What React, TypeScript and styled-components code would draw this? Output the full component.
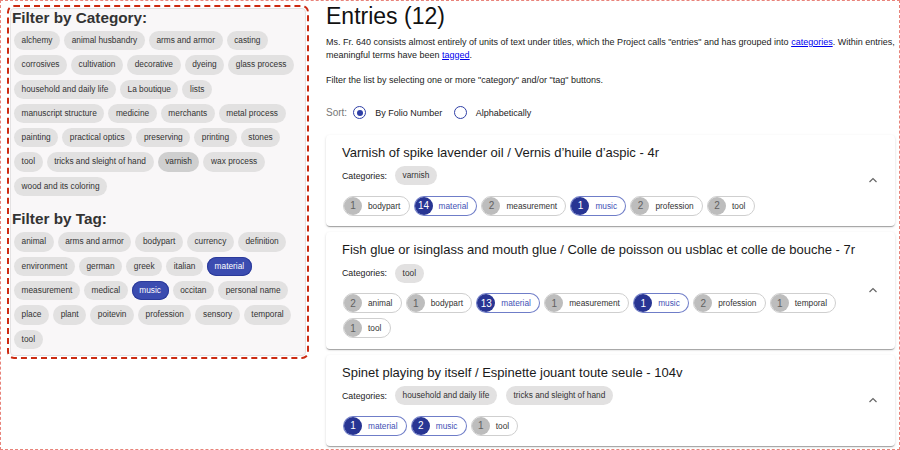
import React from "react";
import styled, { createGlobalStyle } from "styled-components";

const GlobalStyle = createGlobalStyle`
  html, body { margin: 0; padding: 0; background: #fff; }
  body { font-family: "Liberation Sans", Arial, Helvetica, sans-serif; color: #222; }
  * { box-sizing: border-box; }
`;

const Page = styled.div`
  width: 900px;
  height: 450px;
  border: 1px dashed #e8837a;
  overflow: hidden;
  display: flex;
  align-items: flex-start;
`;

const Sidebar = styled.aside`
  margin: 7px 0 0 9px;
  width: 296px;
  flex-shrink: 0;
  background: #f9f7f8;
  border: 1px solid #e4e2e3;
  border-radius: 4px;
  outline: 2px dashed #cc2a12;
  outline-offset: 1px;
  padding: 0 4px 6.5px 1px;
`;

const SideHeading = styled.h2<{ $spaced?: boolean }>`
  margin: ${(p) => (p.$spaced ? "14.4px" : "0")} 0 0 0;
  font-size: 15.3px;
  line-height: 17px;
  font-weight: 700;
  color: #333;
`;

const ChipGroup = styled.div`
  display: flex;
  flex-wrap: wrap;
  gap: 5px 4px;
  margin-top: 5px;
  padding-left: 2px;
`;

const FilterChip = styled.span<{ $selected?: boolean; $focus?: boolean }>`
  display: inline-flex;
  align-items: center;
  height: 19.3px;
  padding: 0 7.6px;
  border-radius: 10px;
  font-size: 8.3px;
  line-height: 19.3px;
  white-space: nowrap;
  color: ${(p) => (p.$selected ? "#fff" : "#333")};
  background: ${(p) =>
    p.$selected ? "#3b4cb0" : p.$focus ? "#cfcfcf" : "#e2e1e1"};
  box-shadow: ${(p) => (p.$selected ? "inset 0 0 0 1px #2b3a9a" : "none")};
`;

const Main = styled.main`
  margin-left: 20px;
  width: 569px;
  flex-shrink: 0;
  padding-top: 1.5px;
`;

const Title = styled.h1`
  margin: 0;
  font-size: 23px;
  line-height: 27px;
  font-weight: 400;
  color: #111;
`;

const Intro = styled.p<{ $gap: number }>`
  margin: ${(p) => p.$gap}px 0 0 0;
  font-size: 9px;
  line-height: 13px;
  color: #222;
`;

const Link = styled.a`
  color: #0000ee;
  text-decoration: underline;
`;

const SortRow = styled.div`
  margin-top: 19.7px;
  display: flex;
  align-items: center;
  height: 13px;
`;

const SortLabel = styled.span`
  font-size: 10px;
  color: #777;
  margin-right: 6px;
`;

const Radio = styled.span<{ $checked?: boolean }>`
  width: 13px;
  height: 13px;
  border-radius: 50%;
  border: 1.5px solid #2f3fa6;
  display: inline-flex;
  align-items: center;
  justify-content: center;
  margin-right: 9px;
  &::after {
    content: "";
    width: 6px;
    height: 6px;
    border-radius: 50%;
    background: ${(p) => (p.$checked ? "#2f3fa6" : "transparent")};
  }
`;

const RadioLabel = styled.span`
  font-size: 9px;
  color: #222;
  margin-right: 11.5px;
`;

const CardList = styled.div`
  margin-top: 15.5px;
  display: flex;
  flex-direction: column;
  gap: 6px;
`;

const Card = styled.section`
  display: flex;
  align-items: center;
  padding: 10px 10px 10.5px 16px;
  background: #fff;
  border-radius: 4px;
  box-shadow: 0 2px 1px -1px rgba(0, 0, 0, 0.2), 0 1px 1px 0 rgba(0, 0, 0, 0.14),
    0 1px 3px 0 rgba(0, 0, 0, 0.12);
`;

const CardBody = styled.div`
  flex: 1;
  min-width: 0;
`;

const CardTitle = styled.h3`
  margin: 0;
  font-size: 13px;
  line-height: 15px;
  font-weight: 400;
  color: #1a1a1a;
  white-space: nowrap;
`;

const CategoryRow = styled.div`
  margin-top: 6.5px;
  display: flex;
  align-items: center;
`;

const CatLabel = styled.span`
  font-size: 8.8px;
  color: #222;
  margin-right: 8px;
`;

const CatChips = styled.div`
  display: flex;
  gap: 9px;
`;

const CatChip = styled(FilterChip)`
  height: 19px;
  line-height: 19px;
`;

const TagRow = styled.div`
  margin-top: 10.5px;
  display: flex;
  flex-wrap: wrap;
  gap: 5px 4px;
  padding-left: 1px;
`;

const TagChip = styled.span<{ $primary?: boolean }>`
  display: inline-flex;
  align-items: center;
  height: 20px;
  border-radius: 10px;
  border: 1px solid ${(p) => (p.$primary ? "rgba(63, 81, 181, 0.75)" : "#cfcfcf")};
  padding-right: 8.3px;
  font-size: 8.3px;
  white-space: nowrap;
  color: ${(p) => (p.$primary ? "#3f51b5" : "#333")};
  background: #fff;
`;

const Avatar = styled.span<{ $primary?: boolean }>`
  width: 18px;
  height: 18px;
  border-radius: 50%;
  display: inline-flex;
  align-items: center;
  justify-content: center;
  margin-right: 6px;
  font-size: 10px;
  background: ${(p) => (p.$primary ? "#283593" : "#bdbdbd")};
  color: ${(p) => (p.$primary ? "#fff" : "#616161")};
`;

const ExpandIcon = styled.span`
  width: 24px;
  height: 24px;
  flex-shrink: 0;
  display: flex;
  align-items: center;
  justify-content: center;
  color: #666;
`;

const categories = [
  "alchemy", "animal husbandry", "arms and armor", "casting", "corrosives",
  "cultivation", "decorative", "dyeing", "glass process", "household and daily life",
  "La boutique", "lists", "manuscript structure", "medicine", "merchants",
  "metal process", "painting", "practical optics", "preserving", "printing",
  "stones", "tool", "tricks and sleight of hand", "varnish", "wax process",
  "wood and its coloring",
];

const tags = [
  "animal", "arms and armor", "bodypart", "currency", "definition", "environment",
  "german", "greek", "italian", "material", "measurement", "medical", "music",
  "occitan", "personal name", "place", "plant", "poitevin", "profession",
  "sensory", "temporal", "tool",
];

const selectedTags = ["material", "music"];

type Entry = {
  title: string;
  cats: string[];
  tags: [number, string][];
};

const entries: Entry[] = [
  {
    title: "Varnish of spike lavender oil / Vernis d\u2019huile d\u2019aspic - 4r",
    cats: ["varnish"],
    tags: [[1, "bodypart"], [14, "material"], [2, "measurement"], [1, "music"], [2, "profession"], [2, "tool"]],
  },
  {
    title: "Fish glue or isinglass and mouth glue / Colle de poisson ou usblac et colle de bouche - 7r",
    cats: ["tool"],
    tags: [[2, "animal"], [1, "bodypart"], [13, "material"], [1, "measurement"], [1, "music"], [2, "profession"], [1, "temporal"], [1, "tool"]],
  },
  {
    title: "Spinet playing by itself / Espinette jouant toute seule - 104v",
    cats: ["household and daily life", "tricks and sleight of hand"],
    tags: [[1, "material"], [2, "music"], [1, "tool"]],
  },
];

const Chevron = () => (
  <svg width="10" height="6" viewBox="0 0 10 6" fill="none">
    <path d="M1.5 5 L5 1.5 L8.5 5" stroke="currentColor" strokeWidth="1.2" />
  </svg>
);

export default function App() {
  return (
    <>
      <GlobalStyle />
      <Page>
        <Sidebar>
          <SideHeading>Filter by Category:</SideHeading>
          <ChipGroup>
            {categories.map((c) => (
              <FilterChip key={c} $focus={c === "varnish"}>{c}</FilterChip>
            ))}
          </ChipGroup>
          <SideHeading $spaced>Filter by Tag:</SideHeading>
          <ChipGroup>
            {tags.map((t) => (
              <FilterChip key={t} $selected={selectedTags.includes(t)}>{t}</FilterChip>
            ))}
          </ChipGroup>
        </Sidebar>
        <Main>
          <Title>Entries (12)</Title>
          <Intro $gap={6}>
            Ms. Fr. 640 consists almost entirely of units of text under titles, which the Project
            calls "entries" and has grouped into <Link href="#">categories</Link>. Within entries,
            meaningful terms have been <Link href="#">tagged</Link>.
          </Intro>
          <Intro $gap={12}>
            Filter the list by selecting one or more "category" and/or "tag" buttons.
          </Intro>
          <SortRow>
            <SortLabel>Sort:</SortLabel>
            <Radio $checked />
            <RadioLabel>By Folio Number</RadioLabel>
            <Radio />
            <RadioLabel>Alphabetically</RadioLabel>
          </SortRow>
          <CardList>
            {entries.map((e) => (
              <Card key={e.title}>
                <CardBody>
                  <CardTitle>{e.title}</CardTitle>
                  <CategoryRow>
                    <CatLabel>Categories:</CatLabel>
                    <CatChips>
                      {e.cats.map((c) => (
                        <CatChip key={c}>{c}</CatChip>
                      ))}
                    </CatChips>
                  </CategoryRow>
                  <TagRow>
                    {e.tags.map(([n, t]) => {
                      const primary = selectedTags.includes(t);
                      return (
                        <TagChip key={t} $primary={primary}>
                          <Avatar $primary={primary}>{n}</Avatar>
                          {t}
                        </TagChip>
                      );
                    })}
                  </TagRow>
                </CardBody>
                <ExpandIcon>
                  <Chevron />
                </ExpandIcon>
              </Card>
            ))}
          </CardList>
        </Main>
      </Page>
    </>
  );
}
